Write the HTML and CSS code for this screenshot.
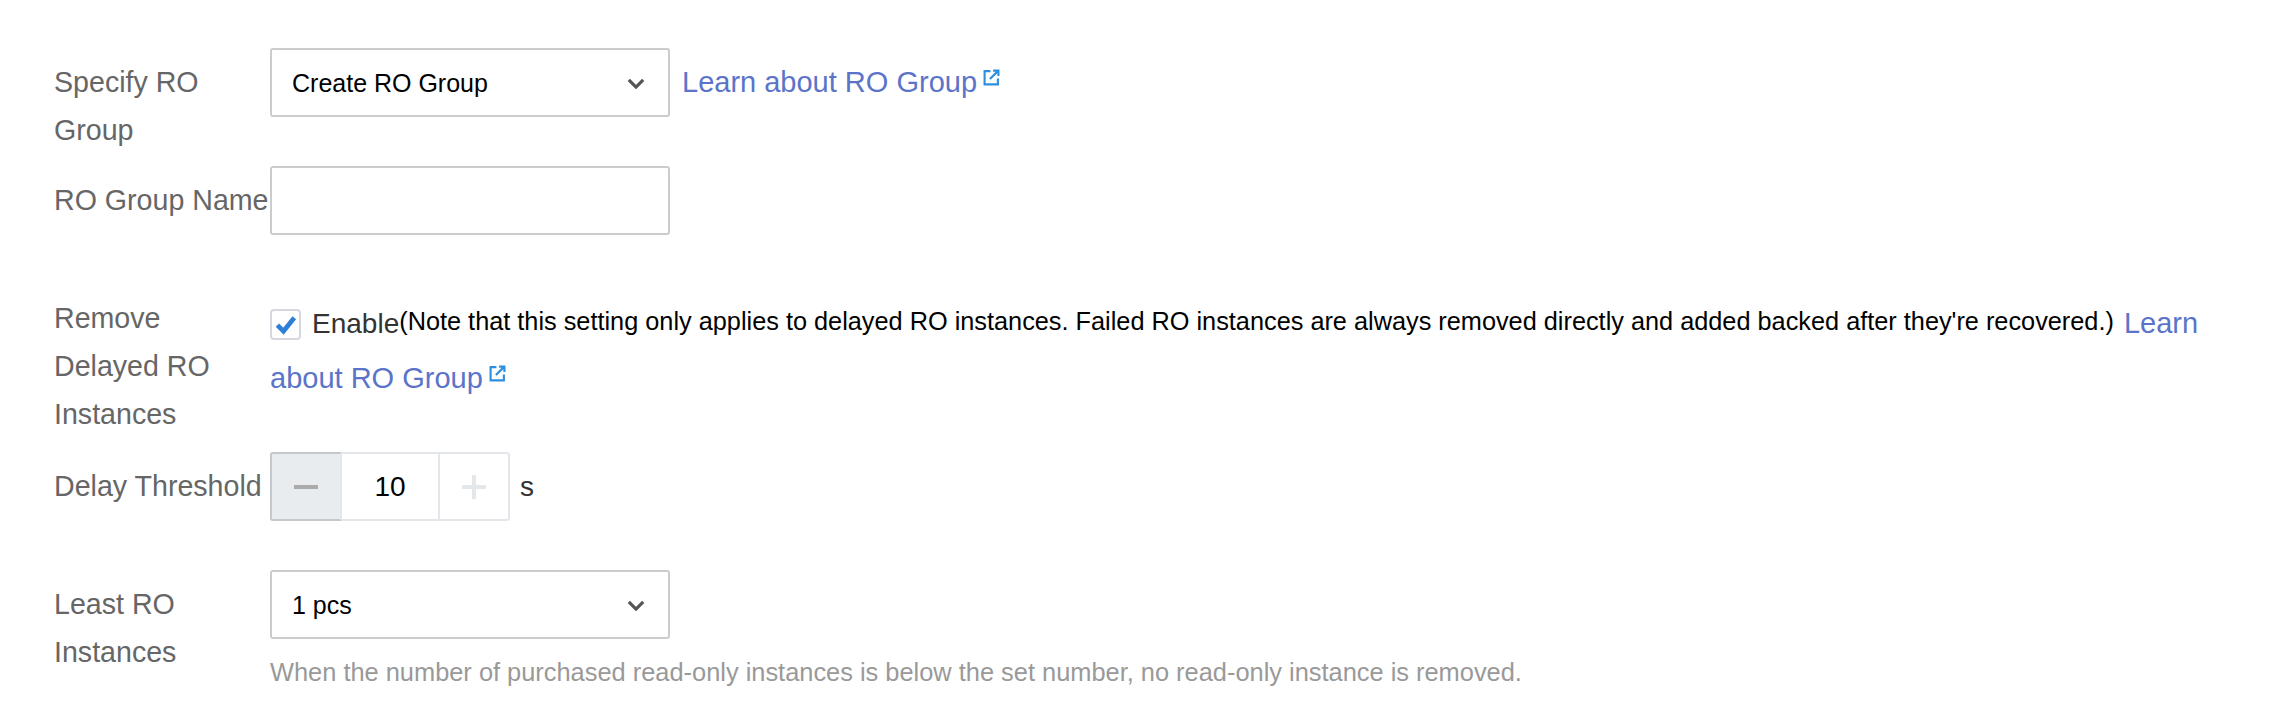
FILE: index.html
```html
<!DOCTYPE html>
<html lang="en">
<head>
    <meta charset="UTF-8" />
    <title>RO Group</title>
    <link rel="stylesheet" href="styles.css">
</head>
<body>

<form class="form">
    <div class="row">
        <label class="label">Specify RO<br>Group</label>
        <div class="field">
            <div class="select">
                <span>Create RO Group</span>
                <svg class="arrow" viewBox="0 0 20 12"><path d="M2 2l8 8 8-8" /></svg>
            </div>
            <a class="link link-side">Learn about RO Group<svg class="ext" viewBox="0 0 16 16"><path d="M7 2H1.500V14.500H14V9" /><path d="M6.500 9.500L14 2M9.500 1.500H14.500V6.500" /></svg></a>
        </div>
    </div>

    <div class="row row-spaced">
        <label class="label">RO Group Name</label>
        <div class="field">
            <input class="input" type="text" />
        </div>
    </div>

    <div class="row row-remove">
        <label class="label">Remove<br>Delayed RO<br>Instances</label>
        <div class="field-text">
            <span class="checkbox"><svg viewBox="0 0 20 20"><path d="M4 10.500l4.500 4.500L16.500 5" /></svg></span>
            <span class="enable">Enable</span><span class="note">(Note that this setting only applies to delayed RO instances. Failed RO instances are always removed directly and added backed after they're recovered.)</span>
            <a class="link link-inline">Learn about RO Group<svg class="ext" viewBox="0 0 16 16"><path d="M7 2H1.500V14.500H14V9" /><path d="M6.500 9.500L14 2M9.500 1.500H14.500V6.500" /></svg></a>
        </div>
    </div>

    <div class="row row-spaced">
        <label class="label">Delay Threshold</label>
        <div class="field">
            <div class="stepper">
                <span class="step step-minus"></span>
                <span class="step-value">10</span>
                <span class="step step-plus"></span>
            </div>
            <span class="unit">s</span>
        </div>
    </div>

    <div class="row">
        <label class="label">Least RO<br>Instances</label>
        <div>
            <div class="select">
                <span>1 pcs</span>
                <svg class="arrow" viewBox="0 0 20 12"><path d="M2 2l8 8 8-8" /></svg>
            </div>
            <p class="help">When the number of purchased read-only instances is below the set number, no read-only instance is removed.</p>
        </div>
    </div>
</form>

</body>
</html>
```

FILE: styles.css
```css
body {
    margin: 0;
    background: white;
    font-family: 'Liberation Sans', Arial, sans-serif;
}

.form {
    padding: 48px 54px 0;
}

.row {
    display: flex;
    margin-bottom: 12px;
}

.row-spaced {
    margin-bottom: 49px;
}

.row-remove {
    margin-bottom: 14px;
}

.label {
    flex: none;
    width: 216px;
    padding-top: 10px;
    font-size: 28.6px;
    line-height: 48px;
    color: #666;
    white-space: nowrap;
}

.field {
    display: flex;
    align-items: flex-start;
}

.field-text {
    flex: 1;
    padding-top: 10px;
    font-size: 25.3px;
    line-height: 54px;
    color: #000;
}

.select {
    box-sizing: border-box;
    width: 400px;
    height: 69px;
    padding: 2px 23px 0 20px;
    display: flex;
    align-items: center;
    justify-content: space-between;
    border: 2px solid #ccc;
    border-radius: 3px;
    font-size: 25px;
    color: #000;
}

.arrow {
    width: 18px;
    height: 11px;
    fill: none;
    stroke: #555;
    stroke-width: 3.500;
}

.input {
    display: block;
    box-sizing: border-box;
    width: 400px;
    height: 69px;
    border: 2px solid #ccc;
    border-radius: 3px;
}

.link {
    font-size: 29px;
    color: #5b74c9;
}

.link-side {
    margin: 10px 0 0 12px;
    line-height: 48px;
}

.link-inline {
    margin-left: 3px;
}

.ext {
    width: 17px;
    height: 17px;
    margin-left: 6px;
    vertical-align: 6px;
    fill: none;
    stroke: #2d8fe0;
    stroke-width: 2;
}

.checkbox {
    box-sizing: border-box;
    display: inline-block;
    width: 31px;
    height: 31px;
    margin-right: 4px;
    vertical-align: -7px;
    border: 2px solid #d5d8de;
    border-radius: 4px;
}

.checkbox svg {
    display: block;
    fill: none;
    stroke: #2f7fd6;
    stroke-width: 3.500;
}

.enable {
    font-size: 28px;
    color: #333;
}

.note {
    vertical-align: 3px;
}

.stepper {
    box-sizing: border-box;
    display: flex;
    width: 240px;
    height: 69px;
    border: 2px solid #e3e6eb;
    border-radius: 3px;
}

.step {
    position: relative;
    flex: none;
    width: 68px;
}

.step-minus {
    width: 72px;
    margin: -2px 0 -2px -2px;
    background: #e9ecef;
    border: 2px solid #c5c8cd;
    border-right: 2px solid #e3e6eb;
    border-radius: 3px 0 0 3px;
    box-sizing: border-box;
}

.step::before,
.step::after {
    content: "";
    position: absolute;
    left: 50%;
    top: 50%;
    width: 24px;
    height: 4px;
    margin: -2px 0 0 -12px;
    background: #e3e6eb;
}

.step-minus::before {
    background: #aaa;
}

.step-minus::after {
    display: none;
}

.step-plus::after {
    transform: rotate(90deg);
}

.step-value {
    flex: 1;
    text-align: center;
    font-size: 28px;
    line-height: 65px;
    color: #000;
    border-right: 2px solid #e3e6eb;
}

.unit {
    margin-left: 10px;
    font-size: 28px;
    line-height: 69px;
    color: #333;
}

.help {
    margin: 16px 0 0;
    font-size: 25.4px;
    line-height: 34px;
    color: #999;
}
```
